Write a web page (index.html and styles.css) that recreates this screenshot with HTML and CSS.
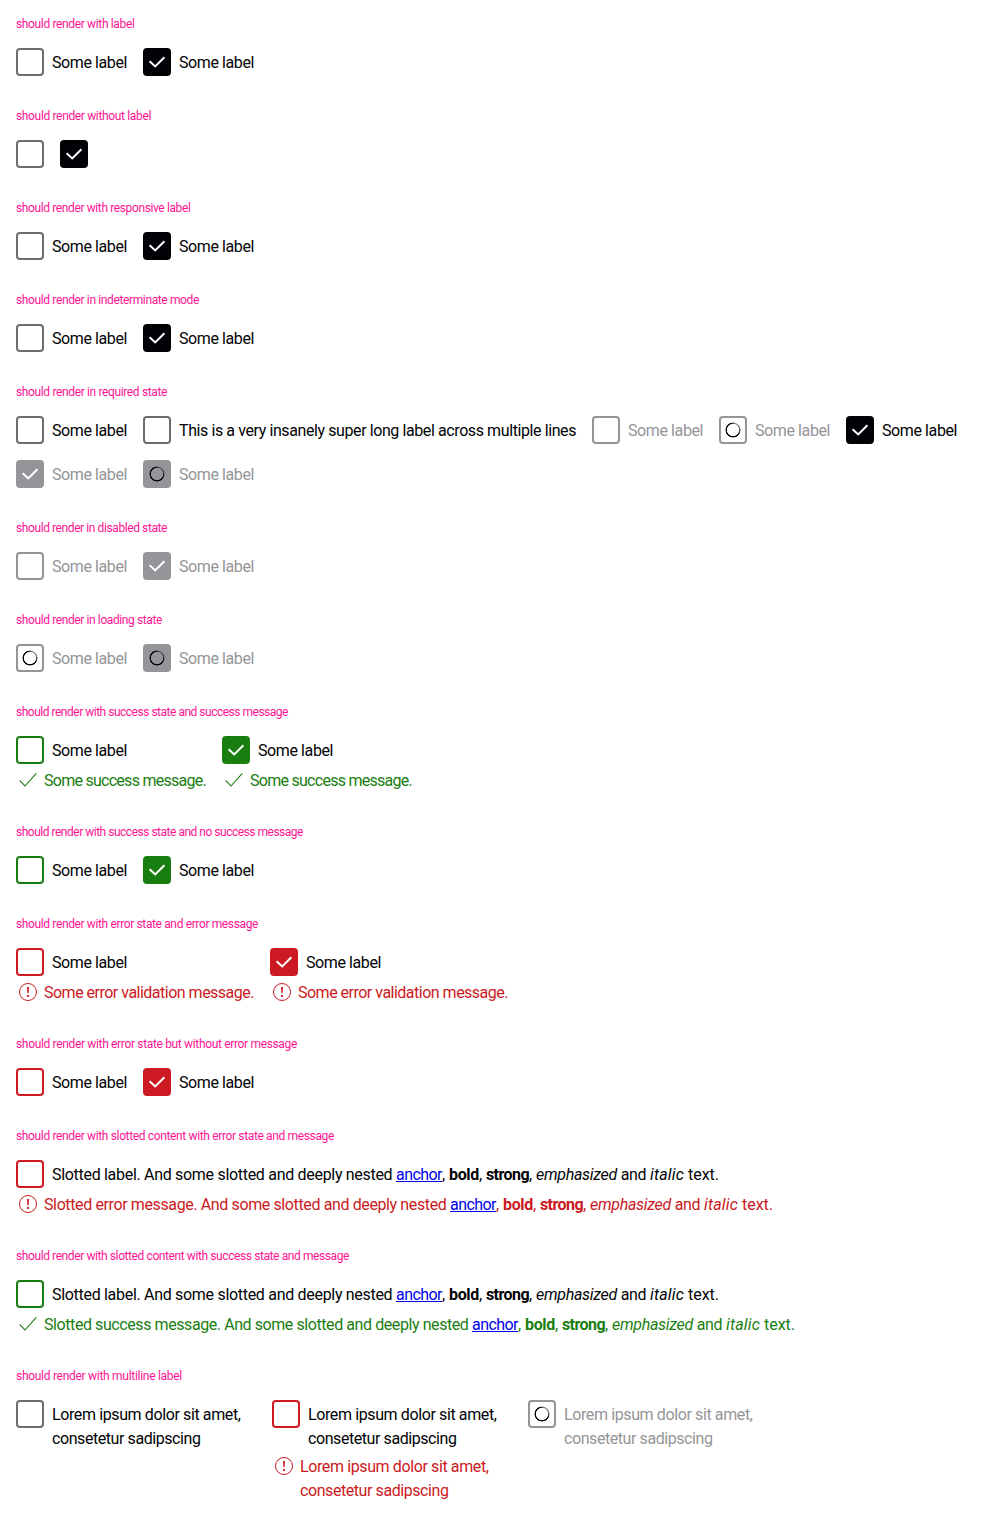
FILE: index.html
```html
<!DOCTYPE html>
<html lang="en">
<head>
<meta charset="utf-8">
<title>Checkbox overview</title>
<link rel="stylesheet" href="styles.css">
</head>
<body>
<svg class="defs" width="0" height="0" aria-hidden="true">
  <symbol id="check" viewBox="0 0 24 24"><path d="M4.6 11.2 10.2 16.4 19.4 7.2" fill="none" stroke="currentColor" stroke-width="2"/></symbol>
  <symbol id="success" viewBox="0 0 24 24"><path d="M3.6 12.4 9 18 20.3 5.3" fill="none" stroke="currentColor" stroke-width="1.1"/></symbol>
  <symbol id="error" viewBox="0 0 24 24"><circle cx="12" cy="12" r="8.5" fill="none" stroke="currentColor"/><path d="M11 7h2l-.4 6.3h-1.2zM11.1 15h1.8v2h-1.8z" fill="currentColor"/></symbol>
</svg>
<main id="page"></main>
<script src="script.js"></script>
</body>
</html>
```
FILE: styles.css
```css
* { box-sizing: border-box; }
body { margin: 0; padding: 16px; background: #fff; color: #010205; font: 16px/24px Roboto, sans-serif; font-stretch: 92%; }
.defs { display: block; position: absolute; }
#page { display: flex; flex-direction: column; gap: 32px; }
.title { margin: 0 0 16px; font-size: 12px; font-weight: 400; line-height: 16px; color: #ff1493; white-space: nowrap; }
.row { display: flex; flex-wrap: wrap; align-items: flex-start; gap: 16px; }
.item { display: flex; flex-direction: column; gap: 4px; }
.field { display: flex; gap: 8px; align-items: flex-start; }
.label { padding-top: 3px; margin-bottom: -1px; }
.run { white-space: pre; }
.box { flex: none; display: flex; align-items: center; justify-content: center; width: 28px; height: 28px; border: 2px solid #6b6d70; border-radius: 4px; color: #fff; }
.checked .box { background: #010205; border-color: #010205; }
.box svg { width: 24px; height: 24px; }
.disabled .label { color: #949598; }
.disabled .box { border-color: #949598; }
.disabled.checked .box { background: #949598; }
.success .box { border-color: #197e10; }
.success.checked .box { background: #197e10; }
.error .box { border-color: #cc1922; }
.error.checked .box { background: #cc1922; }
.message { display: flex; gap: 4px; }
.message svg { flex: none; width: 24px; height: 24px; }
.note { padding-top: 1px; margin-bottom: -1px; }
.success .message { color: #197e10; }
.error .message { color: #cc1922; }
.spinner { width: 16px; height: 16px; border-radius: 50%; background: conic-gradient(#010205b0, #01020560 8%, #01020580 18%, #010205d0 30%, #010205 40%, #010205 95%, #010205b0); -webkit-mask: radial-gradient(circle, transparent 5.8px, #000 6.4px, #000 7.2px, transparent 7.8px); mask: radial-gradient(circle, transparent 5.8px, #000 6.4px, #000 7.2px, transparent 7.8px); }
.wide .item { width: 240px; }
a { color: #00e; }
```
FILE: script.js
```js
const icon = (name) => `<svg aria-hidden="true"><use href="#${name}"/></svg>`;
// A run of text tracked to the given width in pixels.
const run = (text, width) => `<span class="run" data-width="${width}">${text}</span>`;
const rich = (kind, width) => run(`Slotted ${kind}. And some slotted and deeply nested `, width)
  + `<a href="#">${run('anchor', 45)}</a>${run(', ', 7)}<b>${run('bold', 30)}</b>${run(', ', 7)}<strong>${run('strong', 43)}</strong>${run(', ', 7)}`
  + `<em>${run('emphasized', 81)}</em>${run(' and ', 33)}<i>${run('italic', 34)}</i>${run(' text.', 35)}`;
const some = run('Some label', 75);
const item = (state, label = some, message = '') => {
  const mark = state.includes('loading') ? '<span class="spinner"></span>' : state.includes('checked') ? icon('check') : '';
  const note = message && `<div class="message">${icon(state.includes('error') ? 'error' : 'success')}<span class="note">${message}</span></div>`;
  return `<div class="item ${state}"><div class="field"><span class="box">${mark}</span>${label && `<span class="label">${label}</span>`}</div>${note}</div>`;
};
const pair = (state = '', label, message) => item(state, label, message) + item(`${state} checked`, label, message);
const lorem = `${run('Lorem ipsum dolor sit amet,', 188.5)}<br>${run('consetetur sadipscing', 148.5)}`;
const sections = [
  ['with label', 118.5, pair()],
  ['without label', 135, pair('', '')],
  ['with responsive label', 174.5, pair()],
  ['in indeterminate mode', 183, pair()],
  ['in required state', 151, item('') + item('', run('This is a very insanely super long label across multiple lines', 397)) + item('disabled') + item('disabled loading') + item('checked') + item('disabled checked') + item('disabled loading checked')],
  ['in disabled state', 151, pair('disabled')],
  ['in loading state', 146, pair('disabled loading')],
  ['with success state and success message', 272, pair('success', some, run('Some success message.', 162))],
  ['with success state and no success message', 287, pair('success')],
  ['with error state and error message', 242, pair('error', some, run('Some error validation message.', 210))],
  ['with error state but without error message', 281, pair('error')],
  ['with slotted content with error state and message', 318, item('error', rich('label', 344), rich('error message', 406))],
  ['with slotted content with success state and message', 333, item('success', rich('label', 344), rich('success message', 428))],
  ['with multiline label', 166, item('', lorem) + item('error', lorem, lorem) + item('disabled loading', lorem), 'wide'],
];
document.getElementById('page').innerHTML = sections.map(([title, width, content, layout = '']) =>
  `<section><h2 class="title">${run(`should render ${title}`, width)}</h2><div class="row ${layout}">${content}</div></section>`).join('');
for (const el of document.querySelectorAll('.run')) {
  const natural = el.getBoundingClientRect().width;
  el.style.letterSpacing = `${(el.dataset.width - natural) / el.textContent.length}px`;
}
```
